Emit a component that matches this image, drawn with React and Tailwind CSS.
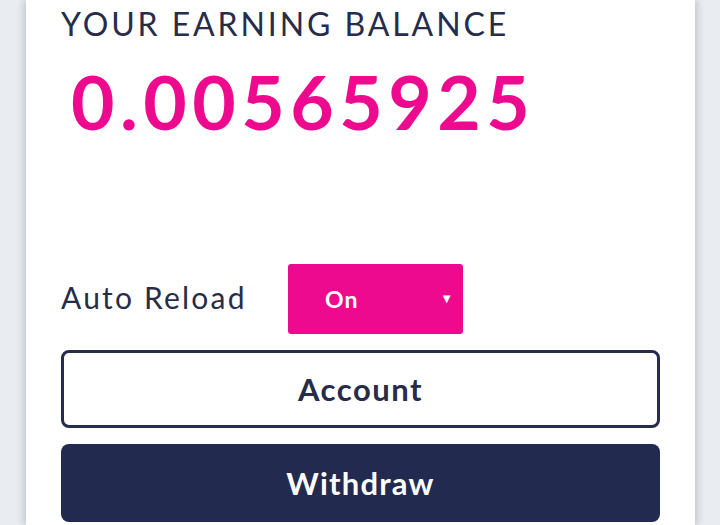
import React, { useState } from 'react';

const App = () => {
  const [autoReload, setAutoReload] = useState('On');

  return (
    <div className="w-[720px] h-[525px] overflow-hidden bg-[#e9edf2] flex font-['Lato',sans-serif]">
      {/* Carte principale */}
      <div className="ml-[26px] w-[669px] h-full bg-white shadow-[-4px_0_6px_rgba(0,0,0,0.12),4px_0_6px_rgba(0,0,0,0.12)] px-[35px] flex flex-col">
        <h2 className="mt-[4px] text-[32px] leading-[40px] tracking-[2.9px] text-[#262c4a] font-normal">
          YOUR EARNING BALANCE
        </h2>
        <p className="mt-[17px] ml-[10px] text-[75px] leading-[80px] tracking-[5.5px] font-bold text-[#ee0a8f]">
          0.00565925
        </p>

        <div className="mt-[123px] flex items-center">
          <span className="w-[227px] text-[30px] tracking-[2.2px] text-[#262c4a] -mt-[4px]">Auto Reload</span>
          <div className="relative w-[175px] h-[70px]">
            <select
              value={autoReload}
              onChange={(e) => setAutoReload(e.target.value)}
              className="appearance-none w-full h-full bg-[#ee0a8f] text-white text-[23px] tracking-[1px] font-bold rounded-[3px] pl-[37px] outline-none"
            >
              <option>On</option>
              <option>Off</option>
            </select>
            <span className="absolute right-[10px] top-1/2 -translate-y-1/2 text-white text-[13px] pointer-events-none">▼</span>
          </div>
        </div>

        <button className="mt-[16px] h-[78px] w-full border-[3px] border-[#262c4a] rounded-[8px] text-[31px] tracking-[1.5px] font-bold text-[#262c4a]">
          Account
        </button>
        <button className="mt-[16px] h-[78px] w-full bg-[#232a4f] rounded-[8px] text-[31px] tracking-[1.2px] font-bold text-white">
          Withdraw
        </button>
      </div>
    </div>
  );
};

export default App;
